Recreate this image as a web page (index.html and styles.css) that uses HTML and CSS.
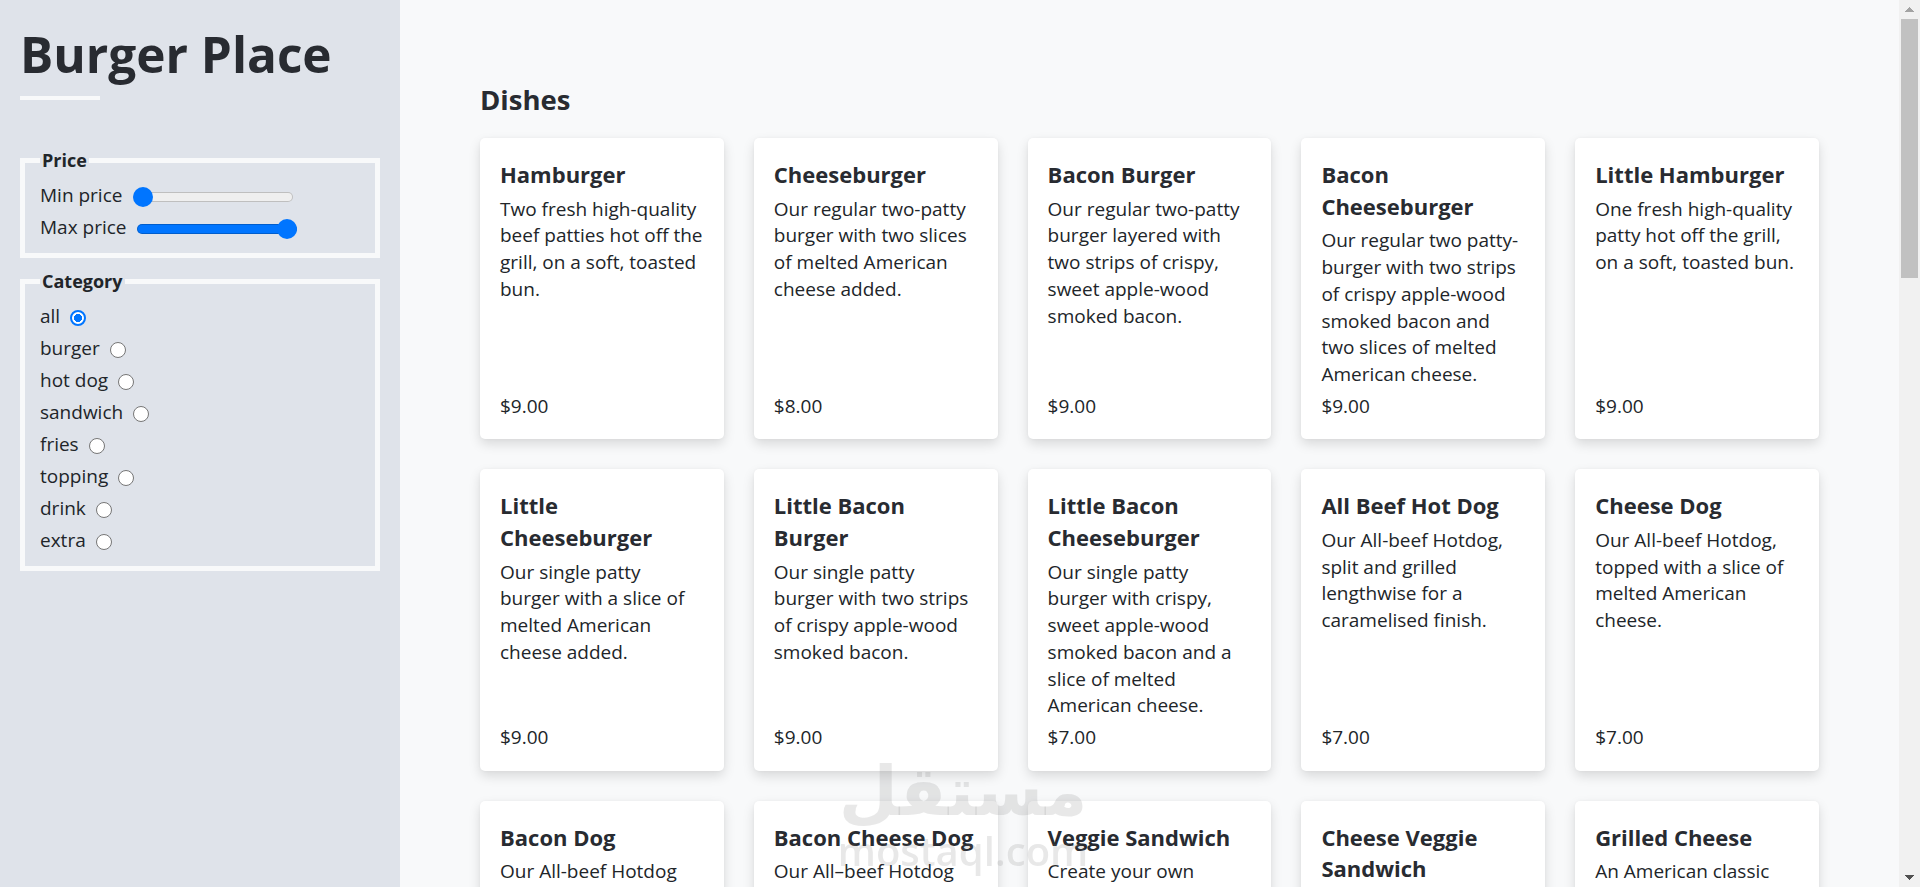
FILE: index.html
```html
<!DOCTYPE html>
<html lang="en">
<head>
<meta charset="utf-8">
<title>Burger Place</title>
<link rel="stylesheet" href="styles.css">
</head>
<body>
<div class="layout">
  <aside class="sidebar">
    <h1 class="brand">Burger Place</h1>
    <div class="brand-rule"></div>

    <fieldset class="filter">
      <legend class="filter-legend">Price</legend>
      <div class="filter-rows">
        <label class="filter-row">Min price <input class="range" type="range" min="0" max="10" value="0" style="--fill: 0%"></label>
        <label class="filter-row">Max price <input class="range" type="range" min="0" max="10" value="10" style="--fill: 100%"></label>
      </div>
    </fieldset>

    <fieldset class="filter filter-category">
      <legend class="filter-legend">Category</legend>
      <div class="filter-rows">
        <label class="filter-row">all <input class="radio" type="radio" name="category" value="all" checked></label>
        <label class="filter-row">burger <input class="radio" type="radio" name="category" value="burger"></label>
        <label class="filter-row">hot dog <input class="radio" type="radio" name="category" value="hot dog"></label>
        <label class="filter-row">sandwich <input class="radio" type="radio" name="category" value="sandwich"></label>
        <label class="filter-row">fries <input class="radio" type="radio" name="category" value="fries"></label>
        <label class="filter-row">topping <input class="radio" type="radio" name="category" value="topping"></label>
        <label class="filter-row">drink <input class="radio" type="radio" name="category" value="drink"></label>
        <label class="filter-row">extra <input class="radio" type="radio" name="category" value="extra"></label>
      </div>
    </fieldset>
  </aside>

  <main class="content">
    <h2 class="section-title">Dishes</h2>
    <div class="dish-grid">
      <article class="dish-card"><h3 class="dish-name">Hamburger</h3><p class="dish-desc">Two fresh high-quality beef patties hot off the grill, on a soft, toasted bun.</p><p class="dish-price">$9.00</p></article>
      <article class="dish-card"><h3 class="dish-name">Cheeseburger</h3><p class="dish-desc">Our regular two-patty burger with two slices of melted American cheese added.</p><p class="dish-price">$8.00</p></article>
      <article class="dish-card"><h3 class="dish-name">Bacon Burger</h3><p class="dish-desc">Our regular two-patty burger layered with two strips of crispy, sweet apple-wood smoked bacon.</p><p class="dish-price">$9.00</p></article>
      <article class="dish-card"><h3 class="dish-name">Bacon Cheeseburger</h3><p class="dish-desc">Our regular two patty-burger with two strips of crispy apple-wood smoked bacon and two slices of melted American cheese.</p><p class="dish-price">$9.00</p></article>
      <article class="dish-card"><h3 class="dish-name">Little Hamburger</h3><p class="dish-desc">One fresh high-quality patty hot off the grill, on a soft, toasted bun.</p><p class="dish-price">$9.00</p></article>

      <article class="dish-card"><h3 class="dish-name">Little Cheeseburger</h3><p class="dish-desc">Our single patty burger with a slice of melted American cheese added.</p><p class="dish-price">$9.00</p></article>
      <article class="dish-card"><h3 class="dish-name">Little Bacon Burger</h3><p class="dish-desc">Our single patty burger with two strips of crispy apple-wood smoked bacon.</p><p class="dish-price">$9.00</p></article>
      <article class="dish-card"><h3 class="dish-name">Little Bacon Cheeseburger</h3><p class="dish-desc">Our single patty burger with crispy, sweet apple-wood smoked bacon and a slice of melted American cheese.</p><p class="dish-price">$7.00</p></article>
      <article class="dish-card"><h3 class="dish-name">All Beef Hot Dog</h3><p class="dish-desc">Our All-beef Hotdog, split and grilled lengthwise for a caramelised finish.</p><p class="dish-price">$7.00</p></article>
      <article class="dish-card"><h3 class="dish-name">Cheese Dog</h3><p class="dish-desc">Our All-beef Hotdog, topped with a slice of melted American cheese.</p><p class="dish-price">$7.00</p></article>

      <article class="dish-card"><h3 class="dish-name">Bacon Dog</h3><p class="dish-desc">Our All-beef Hotdog topped with two strips of crispy apple-wood smoked bacon.</p><p class="dish-price">$7.00</p></article>
      <article class="dish-card"><h3 class="dish-name">Bacon Cheese Dog</h3><p class="dish-desc">Our All–beef Hotdog topped with a slice of melted American cheese and crispy bacon.</p><p class="dish-price">$8.00</p></article>
      <article class="dish-card"><h3 class="dish-name">Veggie Sandwich</h3><p class="dish-desc">Create your own sandwich with grilled onions, mushrooms, green peppers, lettuce and tomatoes.</p><p class="dish-price">$5.00</p></article>
      <article class="dish-card"><h3 class="dish-name">Cheese Veggie Sandwich</h3><p class="dish-desc">Our veggie sandwich with a slice of melted American cheese.</p><p class="dish-price">$6.00</p></article>
      <article class="dish-card"><h3 class="dish-name">Grilled Cheese</h3><p class="dish-desc">An American classic with melted American cheese on a toasted bun.</p><p class="dish-price">$5.00</p></article>

      <article class="dish-card"><h3 class="dish-name">Little Fries</h3><p class="dish-desc">Fresh-cut potatoes cooked twice in peanut oil.</p><p class="dish-price">$3.00</p></article>
      <article class="dish-card"><h3 class="dish-name">Regular Fries</h3><p class="dish-desc">Fresh-cut potatoes cooked twice in peanut oil.</p><p class="dish-price">$4.00</p></article>
      <article class="dish-card"><h3 class="dish-name">Large Fries</h3><p class="dish-desc">Fresh-cut potatoes cooked twice in peanut oil.</p><p class="dish-price">$5.00</p></article>
      <article class="dish-card"><h3 class="dish-name">Cajun Fries</h3><p class="dish-desc">Our fries with a spicy Cajun seasoning.</p><p class="dish-price">$4.00</p></article>
      <article class="dish-card"><h3 class="dish-name">Mayo</h3><p class="dish-desc">Creamy mayonnaise.</p><p class="dish-price">$0.00</p></article>

      <article class="dish-card"><h3 class="dish-name">Relish</h3><p class="dish-desc">Sweet pickle relish.</p><p class="dish-price">$0.00</p></article>
      <article class="dish-card"><h3 class="dish-name">Onions</h3><p class="dish-desc">Fresh raw or grilled onions.</p><p class="dish-price">$0.00</p></article>
      <article class="dish-card"><h3 class="dish-name">Tomatoes</h3><p class="dish-desc">Fresh sliced tomatoes.</p><p class="dish-price">$0.00</p></article>
      <article class="dish-card"><h3 class="dish-name">Lettuce</h3><p class="dish-desc">Crisp iceberg lettuce.</p><p class="dish-price">$0.00</p></article>
      <article class="dish-card"><h3 class="dish-name">Pickles</h3><p class="dish-desc">Crunchy dill pickle slices.</p><p class="dish-price">$0.00</p></article>

      <article class="dish-card"><h3 class="dish-name">Grilled Mushrooms</h3><p class="dish-desc">Mushrooms grilled to order.</p><p class="dish-price">$0.00</p></article>
      <article class="dish-card"><h3 class="dish-name">Ketchup</h3><p class="dish-desc">Classic tomato ketchup.</p><p class="dish-price">$0.00</p></article>
      <article class="dish-card"><h3 class="dish-name">Mustard</h3><p class="dish-desc">Yellow mustard.</p><p class="dish-price">$0.00</p></article>
      <article class="dish-card"><h3 class="dish-name">Jalapeño Peppers</h3><p class="dish-desc">Sliced hot jalapeño peppers.</p><p class="dish-price">$0.00</p></article>
      <article class="dish-card"><h3 class="dish-name">Green Peppers</h3><p class="dish-desc">Fresh green peppers.</p><p class="dish-price">$0.00</p></article>

      <article class="dish-card"><h3 class="dish-name">Bar-B-Q Sauce</h3><p class="dish-desc">Smoky barbecue sauce.</p><p class="dish-price">$0.00</p></article>
      <article class="dish-card"><h3 class="dish-name">Hot Sauce</h3><p class="dish-desc">A little heat for any dish.</p><p class="dish-price">$0.00</p></article>
      <article class="dish-card"><h3 class="dish-name">Coca-Cola</h3><p class="dish-desc">Ice-cold fountain soda.</p><p class="dish-price">$2.00</p></article>
      <article class="dish-card"><h3 class="dish-name">Sprite</h3><p class="dish-desc">Ice-cold fountain soda.</p><p class="dish-price">$2.00</p></article>
      <article class="dish-card"><h3 class="dish-name">Dr Pepper</h3><p class="dish-desc">Ice-cold fountain soda.</p><p class="dish-price">$2.00</p></article>

      <article class="dish-card"><h3 class="dish-name">Bottled Water</h3><p class="dish-desc">Still spring water.</p><p class="dish-price">$1.50</p></article>
      <article class="dish-card"><h3 class="dish-name">Milkshake</h3><p class="dish-desc">Hand-spun vanilla milkshake.</p><p class="dish-price">$5.00</p></article>
      <article class="dish-card"><h3 class="dish-name">Extra Cheese</h3><p class="dish-desc">An extra slice of melted American cheese.</p><p class="dish-price">$1.00</p></article>
      <article class="dish-card"><h3 class="dish-name">Extra Bacon</h3><p class="dish-desc">Two extra strips of apple-wood smoked bacon.</p><p class="dish-price">$1.50</p></article>
      <article class="dish-card"><h3 class="dish-name">Extra Patty</h3><p class="dish-desc">One more fresh beef patty.</p><p class="dish-price">$2.00</p></article>
    </div>
  </main>
</div>

<div class="scrollbar" aria-hidden="true">
  <div class="scrollbar-btn scrollbar-up"></div>
  <div class="scrollbar-track"><div class="scrollbar-thumb"></div></div>
  <div class="scrollbar-btn scrollbar-down"></div>
</div>

<div class="watermark" aria-hidden="true">
  <span class="watermark-ar">مستقل</span>
  <span class="watermark-en">mostaql.com</span>
</div>
</body>
</html>
```

FILE: styles.css
```css
* {
  box-sizing: border-box;
}

body {
  margin: 0;
  padding-right: 21px;
  background: #f8f9fa;
  color: #212529;
  font-family: "Open Sans", "Noto Sans", sans-serif;
  font-size: 19px;
  line-height: 26.7px;
}

.layout {
  display: grid;
  grid-template-columns: 400px 1fr;
  min-height: 100vh;
}

/* ---------- sidebar ---------- */

.sidebar {
  background: #dfe3ea;
  padding: 20px 20px 40px;
}

.brand {
  margin: 1px 0 0;
  font-size: 49.5px;
  font-weight: 700;
  line-height: 66px;
  color: #282b31;
  white-space: nowrap;
}

.brand-rule {
  width: 80px;
  height: 4px;
  margin-top: 9px;
  background: #f8f9fa;
}

.filter {
  margin: 47px 0 0;
  padding: 8.5px 15px 12.5px;
  border: 5px solid #f8f9fa;
  min-width: 0;
}

.filter-category {
  margin-top: 10px;
}

.filter-legend {
  padding: 0 2px;
  font-size: 18px;
  font-weight: 700;
  line-height: 26.7px;
}

.filter-rows {
  display: flex;
  flex-direction: column;
  gap: 5.2px;
}

.filter-row {
  display: block;
  height: 26.7px;
  white-space: nowrap;
}

.range {
  -webkit-appearance: none;
  appearance: none;
  width: 160px;
  height: 20px;
  margin: 0 0 0 6px;
  padding: 0;
  background: transparent;
  vertical-align: middle;
}

.range::-webkit-slider-runnable-track {
  height: 10px;
  border-radius: 5px;
  background: linear-gradient(to right, #0075ff var(--fill), #efefef var(--fill));
  box-shadow: inset 0 0 0 1px rgba(0, 0, 0, 0.2);
}

.range::-webkit-slider-thumb {
  -webkit-appearance: none;
  appearance: none;
  width: 20px;
  height: 20px;
  margin-top: -5px;
  border: none;
  border-radius: 50%;
  background: #0075ff;
}

.radio {
  -webkit-appearance: none;
  appearance: none;
  width: 16px;
  height: 16px;
  margin: 0 0 0 5px;
  border: 1px solid #767676;
  border-radius: 50%;
  background: #fff;
  vertical-align: middle;
}

.radio:checked {
  border: 2px solid #0075ff;
  background: radial-gradient(circle, #0075ff 0 3.8px, #fff 4.3px);
}

/* ---------- main ---------- */

.content {
  padding: 80px 80px 80px;
  min-width: 0;
}

.section-title {
  margin: 0 0 19px;
  font-size: 27.5px;
  font-weight: 700;
  line-height: 39px;
  color: #282b31;
}

.dish-grid {
  display: grid;
  grid-template-columns: repeat(5, minmax(0, 1fr));
  gap: 30px;
}

.dish-card {
  display: flex;
  flex-direction: column;
  padding: 21px 20px 20px;
  background: #fff;
  border-radius: 5px;
  box-shadow: 0 5px 12px rgba(0, 0, 0, 0.13), 0 0 3px rgba(0, 0, 0, 0.04);
}

.dish-name {
  margin: 0 0 5px;
  font-size: 22px;
  font-weight: 700;
  line-height: 31.7px;
  color: #282b31;
}

.dish-desc {
  margin: 0 0 5px;
}

.dish-price {
  margin: auto 0 0;
}

/* ---------- browser scrollbar (drawn over the right edge) ---------- */

.scrollbar {
  position: fixed;
  top: 0;
  right: 0;
  width: 21px;
  height: 100vh;
  display: flex;
  flex-direction: column;
  background: #f1f1f1;
}

.scrollbar-btn {
  flex: 0 0 19px;
  background-repeat: no-repeat;
  background-position: center;
  background-size: 9px 5px;
}

.scrollbar-up {
  background-image: conic-gradient(from 138deg at 50% 0, #a3a3a3 0 84deg, transparent 84deg);
}

.scrollbar-down {
  background-image: conic-gradient(from -42deg at 50% 100%, #505050 0 84deg, transparent 84deg);
}

.scrollbar-track {
  flex: 1;
  padding: 0 2px;
}

.scrollbar-thumb {
  height: 259px;
  background: #c1c1c1;
}

/* ---------- watermark overlay ---------- */

.watermark {
  position: fixed;
  left: 838px;
  top: 750px;
  width: 250px;
  display: flex;
  flex-direction: column;
  align-items: center;
  color: rgba(110, 110, 110, 0.16);
  font-family: "DejaVu Sans", sans-serif;
  font-weight: 700;
  pointer-events: none;
}

.watermark-ar {
  font-size: 68px;
  line-height: 84px;
}

.watermark-en {
  font-family: "Open Sans", sans-serif;
  font-size: 40px;
  line-height: 34px;
  font-weight: 600;
}
```
